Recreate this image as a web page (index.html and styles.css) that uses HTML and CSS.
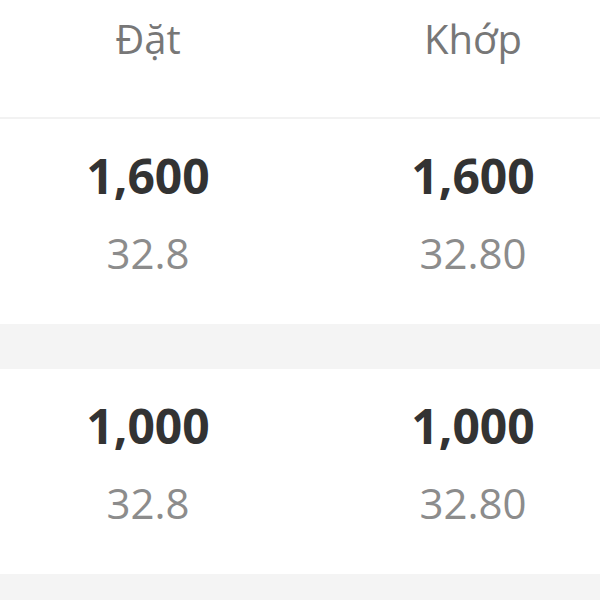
FILE: index.html
```html
<!DOCTYPE html>
<html lang="vi">
<head>
<meta charset="utf-8">
<link rel="stylesheet" href="styles.css">
</head>
<body>
<div class="table">
  <div class="head">
    <div class="col c1">Đặt</div>
    <div class="col c2">Khớp</div>
  </div>
  <div class="row">
    <div class="col c1"><div class="qty">1,600</div><div class="price">32.8</div></div>
    <div class="col c2"><div class="qty">1,600</div><div class="price">32.80</div></div>
  </div>
  <div class="sep"></div>
  <div class="row">
    <div class="col c1"><div class="qty">1,000</div><div class="price">32.8</div></div>
    <div class="col c2"><div class="qty">1,000</div><div class="price">32.80</div></div>
  </div>
  <div class="sep"></div>
</div>
</body>
</html>
```
FILE: styles.css
```css
html, body {
  margin: 0;
  padding: 0;
  background: #fff;
}
body {
  font-family: "Open Sans", "Noto Sans", sans-serif;
  width: 600px;
  height: 600px;
  overflow: hidden;
}
.head, .row {
  display: grid;
  grid-template-columns: 296px 1fr;
}
.col {
  text-align: center;
}
.c2 {
  padding-left: 50px;
}
.head {
  box-sizing: content-box;
  height: 102px;
  padding-top: 15px;
  border-bottom: 2px solid #f2f2f2;
  font-size: 40px;
  line-height: 48px;
  color: #777;
}
.row {
  padding: 27px 0 43px;
}
.qty {
  font-size: 48px;
  line-height: 60px;
  font-weight: 700;
  color: #333;
}
.price {
  font-size: 42px;
  line-height: 56px;
  color: #8c8c8c;
  margin-top: 19px;
}
.sep {
  height: 45px;
  background: #f4f4f4;
}
```
